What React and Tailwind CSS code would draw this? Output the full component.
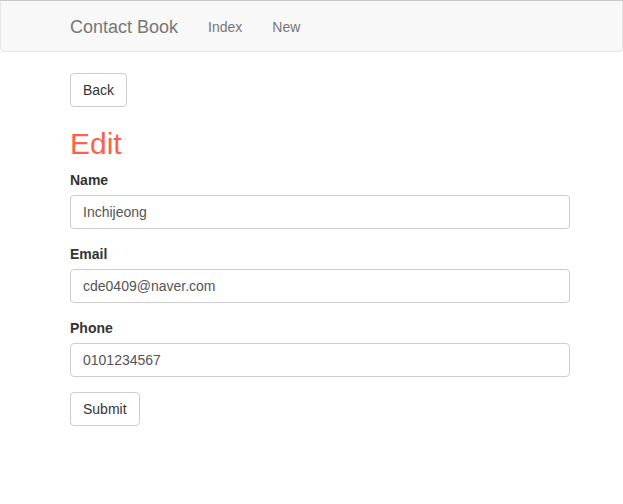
import React from 'react'

const fields = [
  { label: 'Name', value: 'Inchijeong' },
  { label: 'Email', value: 'cde0409@naver.com' },
  { label: 'Phone', value: '0101234567' }
]

const App = () => {
  return (
    <div className="min-h-screen bg-white text-[14px] text-[#333]" style={{ fontFamily: '"Liberation Sans", Arial, sans-serif' }}>
      <div className="h-px bg-[#c9c9c9]" />
      <nav className="h-[51px] bg-[#f8f8f8] border border-t-0 border-[#e7e7e7] rounded-b-[4px] flex items-center pt-[2px]">
        <div className="pl-[69px] flex items-center">
          <span className="text-[18px] text-[#777]">Contact Book</span>
          <span className="ml-[30px] text-[#777]">Index</span>
          <span className="ml-[30px] text-[#777]">New</span>
        </div>
      </nav>

      <div className="ml-[70px] w-[500px] pt-[21px]">
        <button className="h-[34px] px-[12px] border border-[#ccc] rounded-[4px] bg-white text-[#333] leading-[20px]">
          Back
        </button>

        <h2 className="mt-[20px] mb-[9px] text-[30px] leading-[34px] text-[#ff5f4b]">Edit</h2>

        {fields.map(field => (
          <div key={field.label} className="mb-[15px]">
            <label className="block font-bold leading-[20px] mb-[5px]">{field.label}</label>
            <div className="h-[34px] px-[12px] flex items-center border border-[#ccc] rounded-[4px] text-[#555]">
              {field.value}
            </div>
          </div>
        ))}

        <button className="h-[34px] px-[12px] border border-[#ccc] rounded-[4px] bg-white text-[#333] leading-[20px]">
          Submit
        </button>
      </div>
    </div>
  )
}

export default App
